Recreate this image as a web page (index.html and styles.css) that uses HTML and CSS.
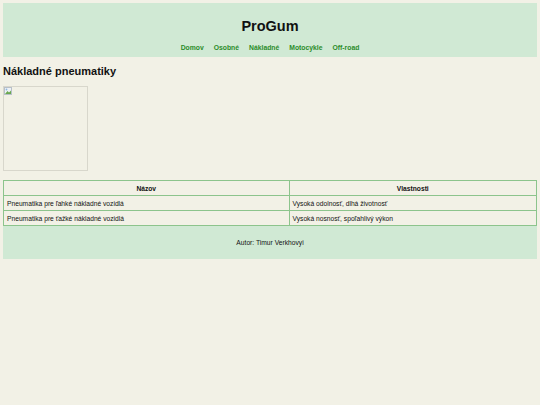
FILE: index.html
```html
<!DOCTYPE html>
<html lang="sk">
<head>
    <meta charset="UTF-8">
    <meta name="viewport" content="width=device-width, initial-scale=1.0">
    <title>ProGum - Nákladné pneumatiky</title>
    <link rel="stylesheet" href="styles.css">
</head>
<body>

    <!-- Header -->
    <header class="site-header">
        <h1>ProGum</h1>
        <nav class="main-nav">
            <a href="#">Domov</a>
            <a href="#">Osobné</a>
            <a href="#">Nákladné</a>
            <a href="#">Motocykle</a>
            <a href="#">Off-road</a>
        </nav>
    </header>

    <main>
        <h2>Nákladné pneumatiky</h2>

        <div class="tire-image">
            <svg class="broken-icon" width="8" height="8" viewBox="0 0 8 8">
                <rect x="0.5" y="0.5" width="7" height="7" fill="#eef2f6" stroke="#b8c0c8"/>
                <path d="M1 7 L3.5 4 L5 5.5 L7 3.5 L7 7 Z" fill="#6aa84f"/>
                <circle cx="2.5" cy="2.5" r="0.9" fill="#8fb8e0"/>
            </svg>
        </div>

        <table class="tire-table">
            <tr>
                <th>Názov</th>
                <th>Vlastnosti</th>
            </tr>
            <tr>
                <td>Pneumatika pre ľahké nákladné vozidlá</td>
                <td>Vysoká odolnosť, dlhá životnosť</td>
            </tr>
            <tr>
                <td>Pneumatika pre ťažké nákladné vozidlá</td>
                <td>Vysoká nosnosť, spoľahlivý výkon</td>
            </tr>
        </table>
    </main>

    <footer class="site-footer">
        <p>Autor: Timur Verkhovyi</p>
    </footer>

</body>
</html>
```

FILE: styles.css
```css
body {
    margin: 3px;
    font-family: "Liberation Sans", Arial, sans-serif;
    background-color: #f2f1e6;
    color: #111;
}
.site-header {
    background-color: #d0e9d4;
    text-align: center;
    padding: 15px 0 6px;
}
.site-header h1 {
    margin: 0 0 10px;
    font-size: 14.5px;
}
.main-nav {
    display: flex;
    justify-content: center;
    gap: 10px;
}
.main-nav a {
    color: #2b8c2b;
    text-decoration: none;
    font-size: 6.8px;
    font-weight: bold;
}
main h2 {
    font-size: 11px;
    margin: 8px 0 9px;
}
.tire-image {
    width: 83px;
    height: 83px;
    border: 1px solid #d8d7cc;
    margin-bottom: 9px;
}
.broken-icon {
    display: block;
}
.tire-table {
    width: 100%;
    border-collapse: collapse;
    font-size: 6.7px;
}
.tire-table th,
.tire-table td {
    border: 1px solid #8cc48c;
    padding: 3px 3px;
    height: 8px;
}
.tire-table th {
    text-align: center;
}
.tire-table td {
    text-align: left;
}
.site-footer {
    background-color: #d0e9d4;
    text-align: center;
    font-size: 6.7px;
    padding: 13px 0;
}
.site-footer p {
    margin: 0;
}
```
